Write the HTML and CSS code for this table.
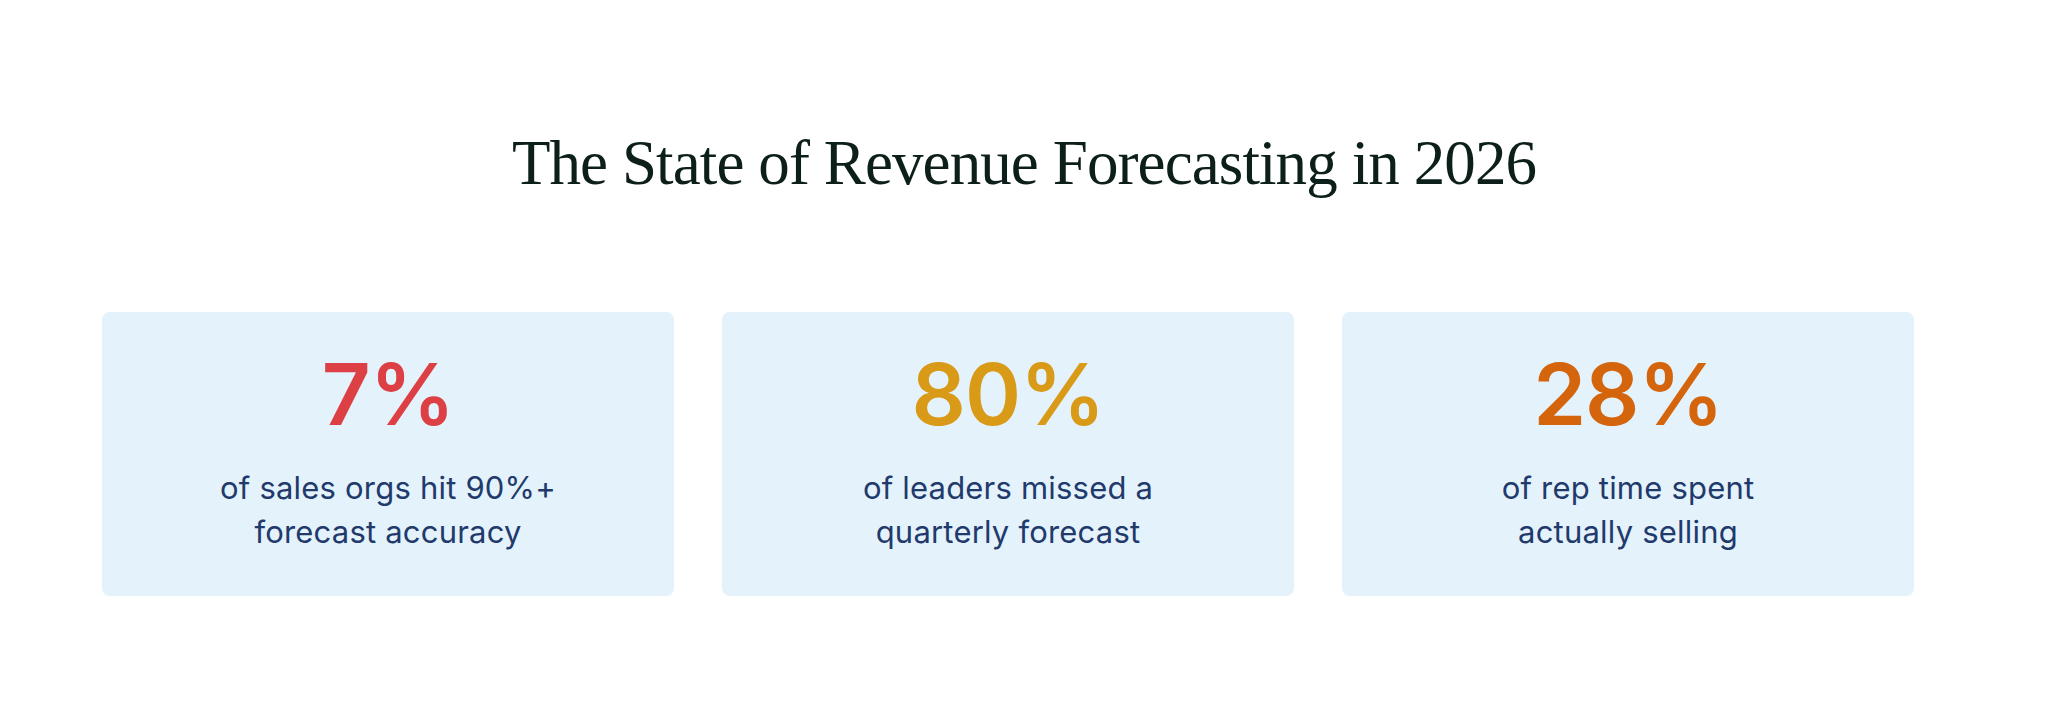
FILE: index.html
```html
<!DOCTYPE html>
<html lang="en">
<head>
<meta charset="utf-8">
<title>The State of Revenue Forecasting in 2026</title>
<link rel="stylesheet" href="styles.css">
</head>
<body>
<main class="page">
  <h1 class="title">The State of Revenue Forecasting in 2026</h1>
  <div class="stats">
    <div class="card">
      <div class="num num-red">7%</div>
      <p class="desc">of sales orgs hit 90%+<br>forecast accuracy</p>
    </div>
    <div class="card">
      <div class="num num-gold">80%</div>
      <p class="desc">of leaders missed a<br>quarterly forecast</p>
    </div>
    <div class="card">
      <div class="num num-orange">28%</div>
      <p class="desc">of rep time spent<br>actually selling</p>
    </div>
  </div>
</main>
</body>
</html>
```
FILE: styles.css
```css
html, body {
  margin: 0;
  padding: 0;
  background: #ffffff;
}
.page {
  padding-top: 126px;
}
.title {
  margin: 0;
  text-align: center;
  font-family: "Liberation Serif", "Times New Roman", serif;
  font-weight: 400;
  font-size: 63px;
  line-height: 75.6px;
  color: #0d1f1a;
  letter-spacing: -0.9px;
}
.stats {
  display: grid;
  grid-template-columns: repeat(3, 572px);
  gap: 48px;
  margin-top: 110px;
  padding: 0 134px 0 102px;
}
.card {
  background: #e4f2fc;
  border-radius: 8px;
  height: 284px;
  box-sizing: border-box;
  padding-top: 40px;
  display: flex;
  flex-direction: column;
  align-items: center;
  font-family: Inter, "Noto Sans", sans-serif;
}
.num {
  font-size: 85px;
  line-height: 85px;
  font-weight: 600;
  letter-spacing: -1px;
}
.num-red { color: #dc3f44; }
.num-gold { color: #d89a17; }
.num-orange { color: #d4650c; }
.desc {
  margin: 29px 0 0;
  text-align: center;
  font-size: 31px;
  line-height: 44px;
  font-weight: 400;
  letter-spacing: 0.2px;
  color: #1f3a6b;
}
```
